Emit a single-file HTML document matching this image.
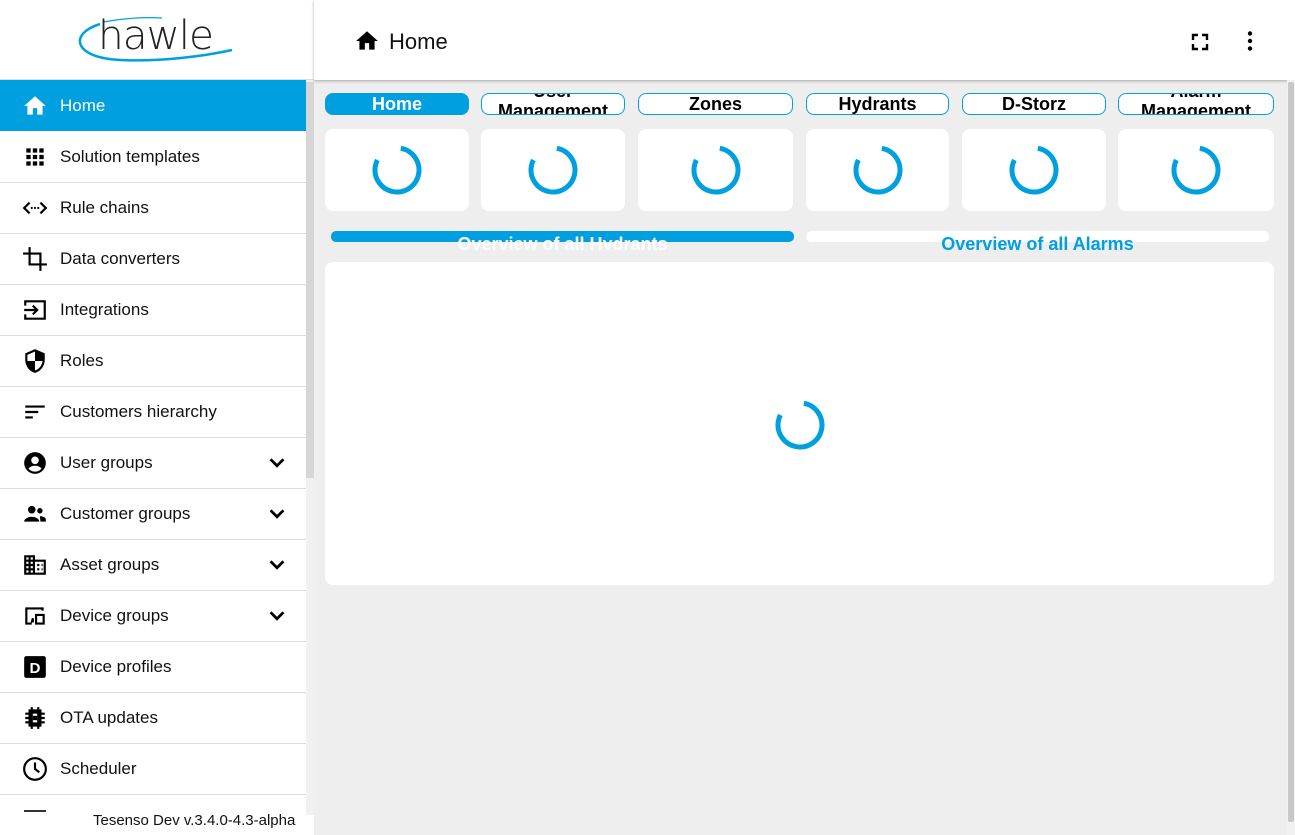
<!DOCTYPE html>
<html><head><meta charset="utf-8"><style>
*{box-sizing:border-box;margin:0;padding:0}
body{width:1295px;height:835px;overflow:hidden;font-family:"Liberation Sans",sans-serif;background:#eee;position:relative}
.side{position:absolute;left:0;top:0;width:314px;height:835px;background:#fff}
.logo{height:80px;border-bottom:1px solid #ddd;position:relative}
.item{position:absolute;left:0;width:306px;height:51px;border-bottom:1px solid #ddd;display:flex;align-items:center;font-size:17px;color:#111}
.item svg{position:absolute;left:22px;width:26px;height:26px}
.item span{position:absolute;left:60px}
.item .ch{left:266px;width:22px;height:22px}
.sb{position:absolute;left:306px;top:80px;width:8px;height:735px;background:#f1f1f1}
.thumb{position:absolute;left:306px;top:82px;width:8px;height:396px;background:#d6d6d6}
.top{position:absolute;left:314px;top:0;width:981px;height:80px;background:#fff;box-shadow:0 1px 3px rgba(0,0,0,.3)}
.tab{position:absolute;top:93px;height:22px;border:1px solid #009fdf;border-radius:8px;background:#fff;font-weight:bold;font-size:18px;text-align:center;line-height:20px;overflow:hidden;color:#000}
.card{position:absolute;top:129px;height:82px;background:#fff;border-radius:8px}
.spin{position:absolute;width:50px;height:50px;left:50%;top:50%;margin:-25px 0 0 -25px}
</style></head><body>
<div class="side">
 <div class="logo">
  <svg width="314" height="80" viewBox="0 0 314 80">
   <path d="M100 24 C68 34 74 58 120 60 C160 62 205 56 232 50" fill="none" stroke="#009fdf" stroke-width="2.5"/>
   <path d="M103 22 C125 18 145 17 162 18" fill="none" stroke="#009fdf" stroke-width="1.2"/>
   <text x="98" y="49" font-family="DejaVu Sans" font-size="40" font-weight="200" fill="#222" letter-spacing="-1" textLength="115" lengthAdjust="spacingAndGlyphs">hawle</text>
  </svg>
 </div>
 <div class="item" style="top:80px;background:#009fdf;color:#fff;border:none"><svg viewBox="0 0 24 24"><path d="M10 20v-6h4v6h5v-8h3L12 3 2 12h3v8z" fill="#fff"/></svg><span>Home</span></div>
 <div class="item" style="top:132px"><svg viewBox="0 0 24 24"><path d="M4 4h4v4H4zm6 0h4v4h-4zm6 0h4v4h-4zM4 10h4v4H4zm6 0h4v4h-4zm6 0h4v4h-4zM4 16h4v4H4zm6 0h4v4h-4zm6 0h4v4h-4z"/></svg><span>Solution templates</span></div>
 <div class="item" style="top:183px"><svg viewBox="0 0 24 24"><path d="M7 7l-5 5 5 5M17 7l5 5-5 5" fill="none" stroke="#000" stroke-width="2"/><circle cx="9" cy="12" r="1"/><circle cx="12" cy="12" r="1"/><circle cx="15" cy="12" r="1"/></svg><span>Rule chains</span></div>
 <div class="item" style="top:234px"><svg viewBox="0 0 24 24"><path d="M7 1v16h16M1 7h16v16" fill="none" stroke="#000" stroke-width="2"/></svg><span>Data converters</span></div>
 <div class="item" style="top:285px"><svg viewBox="0 0 24 24"><path d="M3 8V4h18v16H3v-4M2 12h12M10 8l4 4-4 4" fill="none" stroke="#000" stroke-width="2"/></svg><span>Integrations</span></div>
 <div class="item" style="top:336px"><svg viewBox="0 0 24 24"><path d="M12 1L3 5v6c0 5.5 3.8 10.7 9 12 5.2-1.3 9-6.5 9-12V5zm0 11h7c-.5 4-3.3 7.6-7 8.8V12H5V6.3l7-3.1z"/></svg><span>Roles</span></div>
 <div class="item" style="top:387px"><svg viewBox="0 0 24 24"><path d="M3 6h18v2H3zm0 5h12v2H3zm0 5h7v2H3z"/></svg><span>Customers hierarchy</span></div>
 <div class="item" style="top:438px"><svg viewBox="0 0 24 24"><path d="M12 2a10 10 0 100 20 10 10 0 000-20zm0 4a3.5 3.5 0 110 7 3.5 3.5 0 010-7zm0 14a8 8 0 01-6-2.8c.8-1.8 4-2.7 6-2.7s5.2.9 6 2.7A8 8 0 0112 20z"/></svg><span>User groups</span><svg class="ch" viewBox="0 0 24 24"><path d="M5 8l7 7 7-7" fill="none" stroke="#000" stroke-width="3"/></svg></div>
 <div class="item" style="top:489px"><svg viewBox="0 0 24 24"><circle cx="9" cy="8" r="3.5"/><circle cx="16.5" cy="9" r="2.5"/><path d="M2 19c0-3 4.5-4.5 7-4.5s7 1.5 7 4.5zm14.5-5c2 0 5.5 1 5.5 3v2h-5c0-2-.5-3.5-.5-5z"/></svg><span>Customer groups</span><svg class="ch" viewBox="0 0 24 24"><path d="M5 8l7 7 7-7" fill="none" stroke="#000" stroke-width="3"/></svg></div>
 <div class="item" style="top:540px"><svg viewBox="0 0 24 24"><path d="M2 21V3h10v4h10v14zm2-2h2v-2H4zm0-4h2v-2H4zm0-4h2V9H4zm0-4h2V5H4zm4 12h2v-2H8zm0-4h2v-2H8zm0-4h2V9H8zm0-4h2V5H8zm4 12h8V9h-8zm2-8h2v2h-2zm0 4h2v2h-2zm4-4h1v2h-1zm0 4h1v2h-1z"/></svg><span>Asset groups</span><svg class="ch" viewBox="0 0 24 24"><path d="M5 8l7 7 7-7" fill="none" stroke="#000" stroke-width="3"/></svg></div>
 <div class="item" style="top:591px"><svg viewBox="0 0 24 24"><path d="M3 4h17v3h-2V6H5v12h4v2H3zm9 6h9v10h-9zm2 2v6h5v-6zm-5 2h2v4H8z"/></svg><span>Device groups</span><svg class="ch" viewBox="0 0 24 24"><path d="M5 8l7 7 7-7" fill="none" stroke="#000" stroke-width="3"/></svg></div>
 <div class="item" style="top:642px"><svg viewBox="0 0 24 24"><rect x="2" y="2" width="20" height="20" rx="2"/><text x="12" y="17.5" font-size="14" font-weight="bold" fill="#fff" text-anchor="middle" font-family="Liberation Sans">D</text></svg><span>Device profiles</span></div>
 <div class="item" style="top:693px"><svg viewBox="0 0 24 24"><path d="M7 5h10v14H7zM9 7v10h6V7zM3 8h4M3 12h4M3 16h4M17 8h4M17 12h4M17 16h4M9 2v3M15 2v3M9 19v3M15 19v3" fill="none" stroke="#000" stroke-width="2"/><rect x="10" y="10" width="4" height="4"/></svg><span>OTA updates</span></div>
 <div class="item" style="top:744px"><svg viewBox="0 0 24 24"><circle cx="12" cy="12" r="10" fill="none" stroke="#000" stroke-width="2"/><path d="M12 6v6l4 3" fill="none" stroke="#000" stroke-width="2"/></svg><span>Scheduler</span></div>
 <div style="position:absolute;left:24px;top:810px;width:22px;height:2px;background:#333"></div>
 <div style="position:absolute;left:0;top:814px;width:306px;height:21px;background:#fff"></div>
 <div style="position:absolute;left:93px;top:812px;font-size:15px;color:#111">Tesenso Dev v.3.4.0-4.3-alpha</div>
</div>
<div class="sb"></div><div class="thumb"></div>
<div class="top">
 <svg style="position:absolute;left:40px;top:28px" width="26" height="26" viewBox="0 0 24 24"><path d="M10 20v-6h4v6h5v-8h3L12 3 2 12h3v8z"/></svg>
 <div style="position:absolute;left:75px;top:29px;font-size:22px;color:#111">Home</div>
 <svg style="position:absolute;left:874px;top:30px" width="24" height="24" viewBox="0 0 24 24"><path d="M5 10V5h5M14 5h5v5M19 14v5h-5M10 19H5v-5" fill="none" stroke="#000" stroke-width="2.4"/></svg>
 <svg style="position:absolute;left:924px;top:29px" width="24" height="24" viewBox="0 0 24 24"><circle cx="12" cy="4.5" r="2.2"/><circle cx="12" cy="12" r="2.2"/><circle cx="12" cy="19.5" r="2.2"/></svg>
</div>
<div style="position:absolute;left:1287px;top:80px;width:8px;height:755px;background:#f1f1f1"></div>
<div style="position:absolute;left:1288px;top:82px;width:6px;height:740px;background:#c8c8c8;border-radius:2px"></div>
<div class="tab" style="left:325px;width:144px;background:#009fdf;color:#fff">Home</div>
<div class="tab" style="left:481px;width:144px;line-height:20px"><div style="margin-top:-13px">User<br>Management</div></div>
<div class="tab" style="left:638px;width:155px">Zones</div>
<div class="tab" style="left:806px;width:143px">Hydrants</div>
<div class="tab" style="left:962px;width:144px">D-Storz</div>
<div class="tab" style="left:1118px;width:156px;line-height:20px"><div style="margin-top:-13px">Alarm<br>Management</div></div>
<svg width="0" height="0" style="position:absolute"><defs><g id="sp"><circle cx="25" cy="25" r="22" fill="none" stroke="#009fdf" stroke-width="5" stroke-dasharray="110 200" transform="rotate(-80 25 25)"/></g></defs></svg>
<div class="card" style="left:325px;width:144px"><svg class="spin"><use href="#sp"/></svg></div>
<div class="card" style="left:481px;width:144px"><svg class="spin"><use href="#sp"/></svg></div>
<div class="card" style="left:638px;width:155px"><svg class="spin"><use href="#sp"/></svg></div>
<div class="card" style="left:806px;width:143px"><svg class="spin"><use href="#sp"/></svg></div>
<div class="card" style="left:962px;width:144px"><svg class="spin"><use href="#sp"/></svg></div>
<div class="card" style="left:1118px;width:156px"><svg class="spin"><use href="#sp"/></svg></div>
<div style="position:absolute;left:331px;top:231px;width:463px;height:11px;background:#009fdf;border-radius:5px"></div>
<div style="position:absolute;left:806px;top:231px;width:463px;height:11px;background:#fff;border-radius:5px"></div>
<div style="position:absolute;left:331px;top:231px;width:463px;height:19px;overflow:hidden;text-align:center;font-weight:bold;font-size:18px;color:#fff;padding-top:3px">Overview of all Hydrants</div>
<div style="position:absolute;left:806px;top:231px;width:463px;height:19px;overflow:hidden;text-align:center;font-weight:bold;font-size:18px;color:#009fdf;padding-top:3px">Overview of all Alarms</div>
<div style="position:absolute;left:325px;top:262px;width:949px;height:323px;background:#fff;border-radius:8px"><svg class="spin" style="margin-top:-24px"><use href="#sp"/></svg></div>
</body></html>
